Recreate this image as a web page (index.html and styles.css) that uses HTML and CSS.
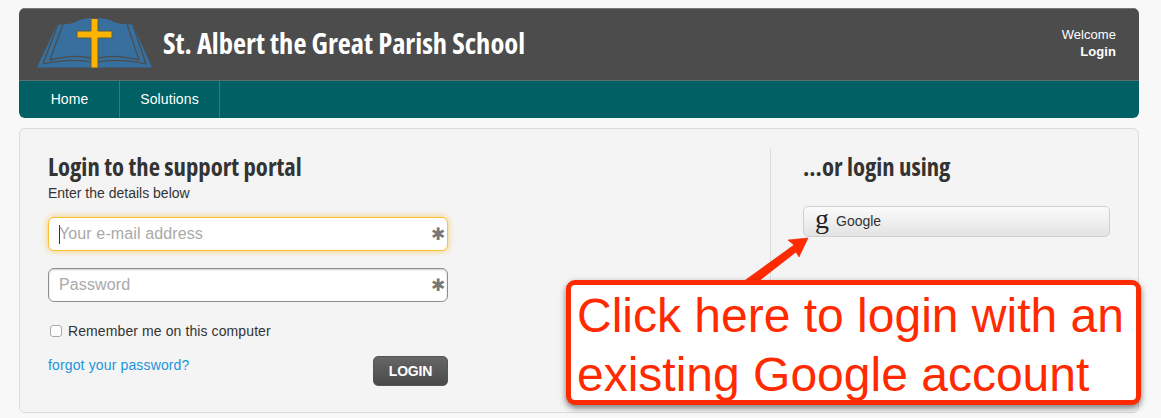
FILE: index.html
```html
<!DOCTYPE html>
<html lang="en">
<head>
<meta charset="utf-8">
<title>St. Albert the Great Parish School</title>
<link rel="stylesheet" href="styles.css">
</head>
<body>
<div class="page">
  <header class="site-head">
    <div class="banner">
      <svg class="logo" width="115" height="50" viewBox="0 0 115 50">
        <path d="M0 49.500 L20 7 L26 6 L31 6 Q38 5 43 2 Q48 0 54 0 L61 0 Q67 0 73 2 Q78 5 85 6 L90 6 L96 7 L115 49.500 Z" fill="#37709f"/>
        <path d="M6 46 L21 6 M13 42 L26 6 M102 42 L90 6 M109 46 L96 7" stroke="#4c4c4c" stroke-width="1.300" fill="none"/>
        <path d="M13 42 Q38 36 54 40 M61 40 Q78 36 102 42" stroke="#4c4c4c" stroke-width="1.300" fill="none"/>
        <path d="M6 46 Q34 40 54 44 M61 44 Q82 40 109 46" stroke="#4c4c4c" stroke-width="1.100" fill="none"/>
        <path d="M54 .5 H61 V13 H75 V20 H61 V50 H54 V20 H40 V13 H54 Z" fill="#fdb400" stroke="#5b5a4a" stroke-width="1"/>
      </svg>
      <h1 class="school"><span class="cond">St. Albert the Great Parish School</span></h1>
      <div class="welcome">
        <span>Welcome</span>
        <a href="#" class="login-link">Login</a>
      </div>
    </div>
    <nav class="tabs">
      <a href="#" class="tab tab-home">Home</a>
      <a href="#" class="tab tab-sol">Solutions</a>
    </nav>
  </header>

  <main class="card">
    <section class="left">
      <h2 class="heading"><span class="cond">Login to the support portal</span></h2>
      <p class="sub">Enter the details below</p>
      <div class="field focus"><i class="caret"></i><span class="ph">Your e-mail address</span><span class="req">✱</span></div>
      <div class="field"><span class="ph">Password</span><span class="req">✱</span></div>
      <label class="remember"><input type="checkbox" class="check"> Remember me on this computer</label>
      <div class="actions">
        <a href="#" class="forgot">forgot your password?</a>
        <button type="button" class="btn-login">LOGIN</button>
      </div>
    </section>
    <section class="right">
      <h2 class="heading"><span class="cond">...or login using</span></h2>
      <button type="button" class="btn-google"><span class="g">g</span>Google</button>
    </section>
  </main>
</div>

<svg class="arrow" width="80" height="60" viewBox="0 0 80 60">
  <path d="M1 54 L55 15 L49 10 L69 8 L60 27 L57 22 L16 54 Z" fill="#ff2a00" stroke="#ea2700" stroke-width=".6"/>
</svg>
<div class="callout">Click here to login with an<br>existing Google account</div>
</body>
</html>
```
FILE: styles.css
```css
* { box-sizing: border-box; }
html, body { margin: 0; height: 418px; overflow: hidden; }
body {
  background: #f8f8f8;
  font-family: "Liberation Sans", Arial, sans-serif;
  color: #333;
  position: relative;
}
.page { padding: 8px 22px 0 19px; }
.cond {
  display: inline-block;
  font-family: "Open Sans", sans-serif;
  font-weight: 700;
  font-stretch: 75%;
  white-space: nowrap;
}
.site-head { border-radius: 6px; overflow: hidden; height: 110px; }
.banner {
  height: 73px;
  background: #4c4c4c;
  border-top: 1px solid #777;
  border-bottom: 1px solid #5f6f70;
  display: flex;
  align-items: flex-start;
  color: #fff;
  padding: 9px 23px 0 18px;
}
.logo { flex: none; }
.school { margin: 7px 0 0 11px; font-size: 28.5px; line-height: 36px; font-weight: 700; flex: 1; }
.welcome {
  display: flex;
  flex-direction: column;
  align-items: flex-end;
  font-size: 13px;
  line-height: 17px;
  margin-top: 8px;
  letter-spacing: .05px;
}
.login-link { color: #fff; font-weight: 700; text-decoration: none; }
.tabs { height: 37px; background: #006064; display: flex; padding-left: 0; }
.tab {
  color: #fff;
  font-size: 14px;
  line-height: 36px;
  letter-spacing: .1px;
  text-decoration: none;
  border-right: 1px solid #2a8080;
  text-align: center;
}
.tab-home { width: 101px; padding-left: 1px; }
.tab-sol { width: 100px; }
.card {
  margin-top: 10px;
  height: 285px;
  background: #f4f4f4;
  border: 1px solid #dcdcdc;
  border-radius: 6px;
  display: flex;
  padding-top: 19px;
}
.left { width: 751px; height: 250px; padding-left: 28px; border-right: 1px solid #dedede; }
.right { flex: 1; padding-left: 32px; }
.heading { margin: 0; font-size: 24.7px; line-height: 38px; font-weight: 700; color: #333; }
.sub { margin: -2px 0 0; font-size: 14px; line-height: 17px; color: #333; }
.field {
  position: relative;
  width: 400px;
  height: 34px;
  margin-top: 15px;
  background: #fff;
  border: 1px solid #8e8e8e;
  border-radius: 6px;
  box-shadow: inset 0 1px 2px rgba(0,0,0,.2);
  display: flex;
  align-items: center;
  padding-left: 10px;
  font-size: 16px;
  letter-spacing: .12px;
}
.field + .field { margin-top: 17px; }
.field.focus {
  border-color: #fbbf3a;
  box-shadow: 0 0 6px rgba(251,191,58,.8);
}
.caret { width: 1px; height: 19px; background: #333; margin-right: -1px; }
.ph { color: #a9a9a9; }
.req { position: absolute; right: 2px; top: 7px; font-size: 17px; color: #777; line-height: 20px; }
.remember {
  display: flex;
  align-items: center;
  margin-top: 20px;
  font-size: 14px;
  line-height: 18px;
  letter-spacing: .1px;
  color: #333;
}
.check {
  appearance: none;
  margin: 0 6px 0 2px;
  width: 12px;
  height: 12px;
  background: #fff;
  border: 1px solid #aaa;
  border-radius: 3px;
}
.actions { width: 400px; display: flex; justify-content: space-between; align-items: flex-start; margin-top: 16px; }
.forgot { color: #1c94dc; font-size: 14px; line-height: 18px; letter-spacing: .14px; text-decoration: none; }
.btn-login {
  width: 75px;
  height: 30px;
  margin-top: 0;
  border: 1px solid #555;
  border-radius: 5px;
  background: linear-gradient(#666, #4a4a4a);
  color: #fff;
  font: 700 14px/1 "Liberation Sans", Arial, sans-serif;
  letter-spacing: -.2px;
}
.btn-google {
  display: flex;
  align-items: center;
  width: 307px;
  height: 31px;
  margin-top: 19px;
  padding: 0 0 2px 11px;
  border: 1px solid #d0d0d0;
  border-radius: 5px;
  background: linear-gradient(#fbfbfb, #e3e3e3);
  color: #333;
  font: 14px "Liberation Sans", Arial, sans-serif;
}
.g { font: 400 28px/24px "Liberation Serif", serif; color: #222; width: 21px; text-align: left; margin-top: -3px; }
.arrow { position: absolute; left: 739px; top: 230px; }
.callout {
  position: absolute;
  left: 566px;
  top: 280px;
  width: 575px;
  height: 125px;
  background: #fff;
  border: 5px solid #ff2a00;
  border-radius: 9px;
  box-shadow: 0 3px 6px rgba(0,0,0,.5);
  color: #ff2a00;
  font-size: 48px;
  line-height: 59px;
  padding: 1px 0 0 6px;
  white-space: nowrap;
}
```
